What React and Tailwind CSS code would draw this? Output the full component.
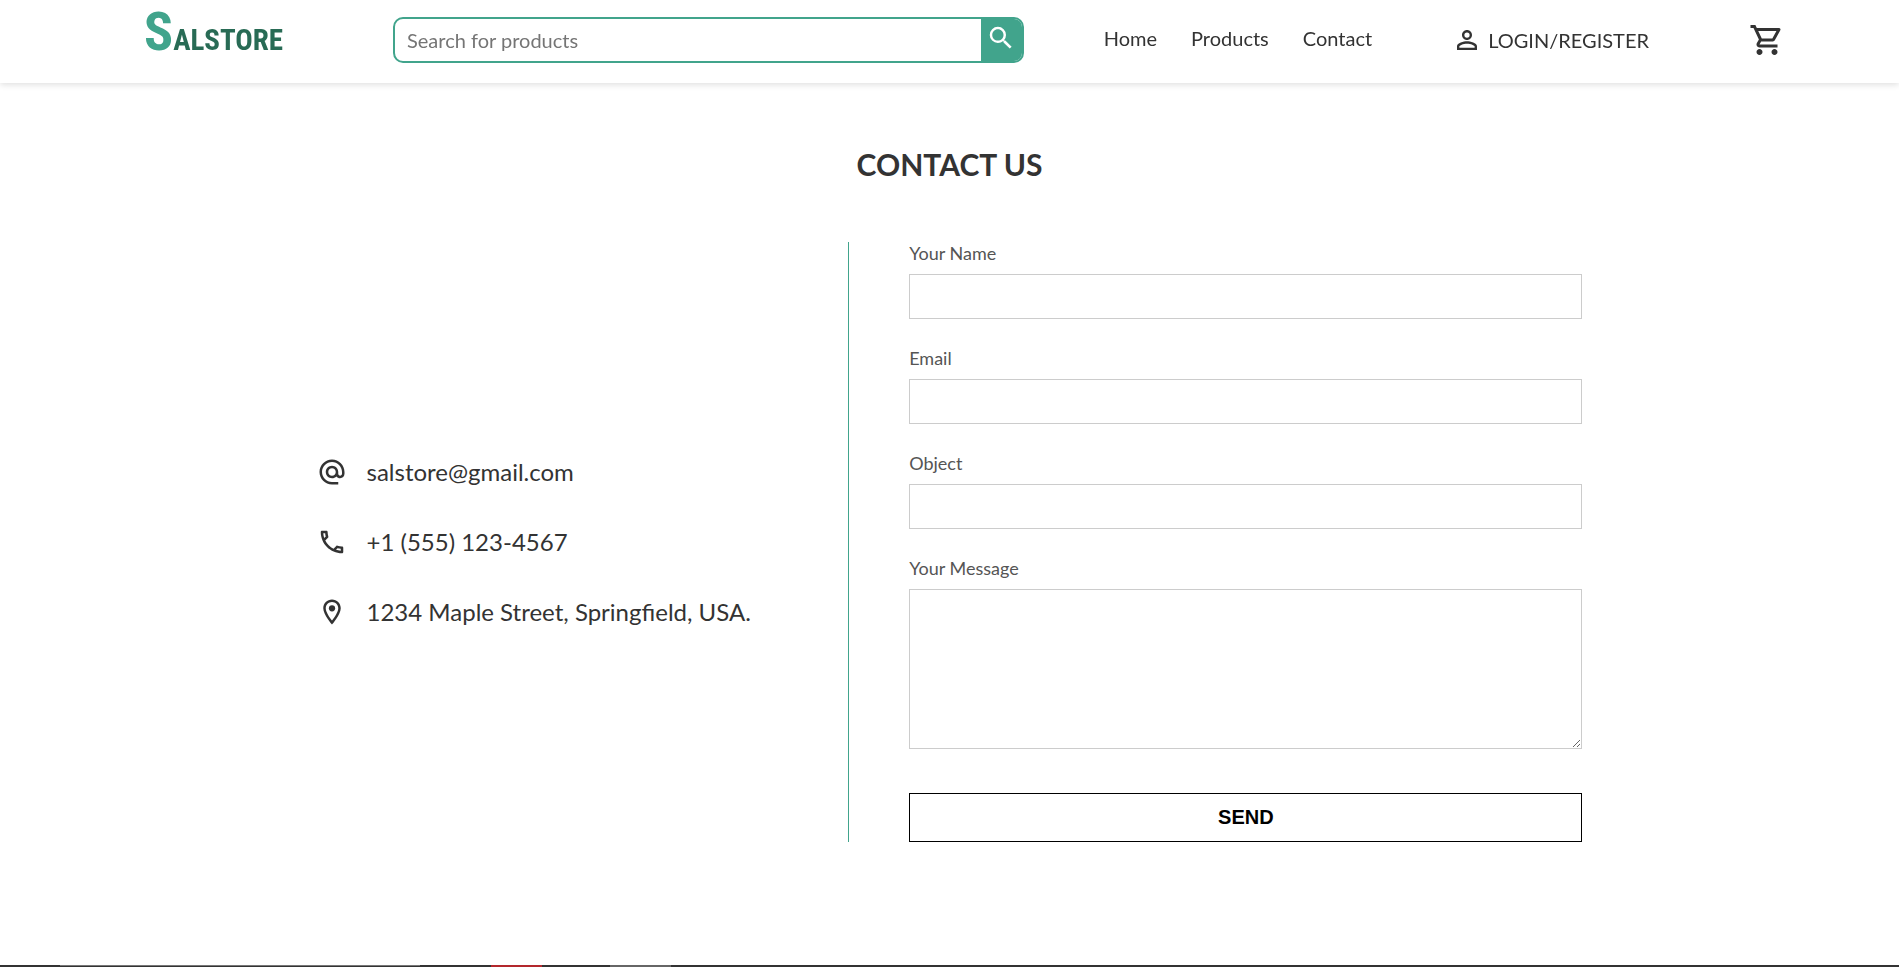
import {
  MdAlternateEmail,
  MdOutlineLocalPhone,
  MdOutlineLocationOn,
  MdOutlineShoppingCart,
  MdPersonOutline,
  MdSearch,
} from "react-icons/md";

const navLinks = ["Home", "Products", "Contact"];

const contacts = [
  { Icon: MdAlternateEmail, text: "salstore@gmail.com" },
  { Icon: MdOutlineLocalPhone, text: "+1 (555) 123-4567" },
  { Icon: MdOutlineLocationOn, text: "1234 Maple Street, Springfield, USA." },
];

const fields = [
  { id: "name", label: "Your Name", type: "text" },
  { id: "email", label: "Email", type: "email" },
  { id: "object", label: "Object", type: "text" },
];

function Logo() {
  return (
    <a
      href="#"
      className="flex w-[249px] shrink-0 items-baseline font-['Liberation_Sans_Narrow','Roboto_Condensed','DejaVu_Sans_Condensed',sans-serif] leading-10 font-bold"
    >
      <span className="text-[54px] text-[#41a48c]">S</span>
      <span className="text-[29px] text-[#286b55]">ALSTORE</span>
    </a>
  );
}

function Header() {
  return (
    <header className="flex h-[83px] items-start bg-white pr-[114px] pl-[144px] shadow-[0_2px_6px_rgba(0,0,0,0.12)] will-change-transform">
      <div className="pt-3">
        <Logo />
      </div>
      <form
        className="mt-[17px] flex h-[46px] grow overflow-hidden rounded-[10px] border-2 border-[#41a48c]"
        role="search"
      >
        <input
          type="search"
          aria-label="Search for products"
          placeholder="Search for products"
          className="min-w-0 grow px-3 text-[20px] outline-none placeholder:text-[#757575]"
        />
        <button
          type="button"
          aria-label="Search"
          className="w-[41px] bg-[#41a48c] pb-1 pl-[5px] text-white"
        >
          <MdSearch size={30} />
        </button>
      </form>
      <nav className="mt-[23px] ml-20 flex gap-[34px] text-[20px] leading-[30px]">
        {navLinks.map((link) => (
          <a key={link} href="#">
            {link}
          </a>
        ))}
      </nav>
      <a
        href="#"
        className="mt-[25px] ml-20 flex items-center gap-1.5 text-[20px] leading-[30px]"
      >
        <MdPersonOutline size={30} />
        LOGIN/REGISTER
      </a>
      <a href="#" aria-label="Cart" className="mt-[22px] ml-[100px]">
        <MdOutlineShoppingCart size={36} />
      </a>
    </header>
  );
}

function ContactForm() {
  return (
    <form className="flex w-[58%] flex-col border-l border-[#41a48c] pl-[60px] text-[18px] leading-[22px] text-[#555]">
      {fields.map(({ id, label, type }) => (
        <div key={id} className="mb-7 flex flex-col gap-2.5">
          <label htmlFor={id}>{label}</label>
          <input
            id={id}
            type={type}
            className="h-[45px] border border-[#ccc] px-3 outline-none"
          />
        </div>
      ))}
      <div className="mb-11 flex flex-col gap-2.5">
        <label htmlFor="message">Your Message</label>
        <textarea
          id="message"
          className="h-40 resize-y border border-[#ccc] px-3 py-2 outline-none"
        />
      </div>
      <button
        type="button"
        className="h-[49px] border border-black pb-0.5 font-['Liberation_Sans',Arial,sans-serif] text-[20px] font-bold text-black"
      >
        SEND
      </button>
    </form>
  );
}

export default function App() {
  return (
    <div className="flex min-h-screen flex-col bg-white font-[Lato,sans-serif] text-[#333]">
      <Header />
      <main className="grow">
        <h1 className="mt-[59px] text-center text-[30px] leading-[44px] font-bold">
          CONTACT US
        </h1>
        <section className="mx-auto mt-14 flex w-2/3">
          <ul className="flex w-[42%] flex-col justify-center gap-10">
            {contacts.map(({ Icon, text }) => (
              <li key={text} className="flex items-center gap-5 text-[24px] leading-[30px]">
                <Icon size={30} className="shrink-0" />
                <span>{text}</span>
              </li>
            ))}
          </ul>
          <ContactForm />
        </section>
      </main>
      <footer className="flex h-0.5 bg-[#333]">
        <div className="ml-[60px] w-[360px] border-t border-[#777]" />
        <div className="ml-[71px] w-[51px] bg-[#b3282d]" />
        <div className="ml-[68px] w-[61px] bg-[#666]" />
      </footer>
    </div>
  );
}
